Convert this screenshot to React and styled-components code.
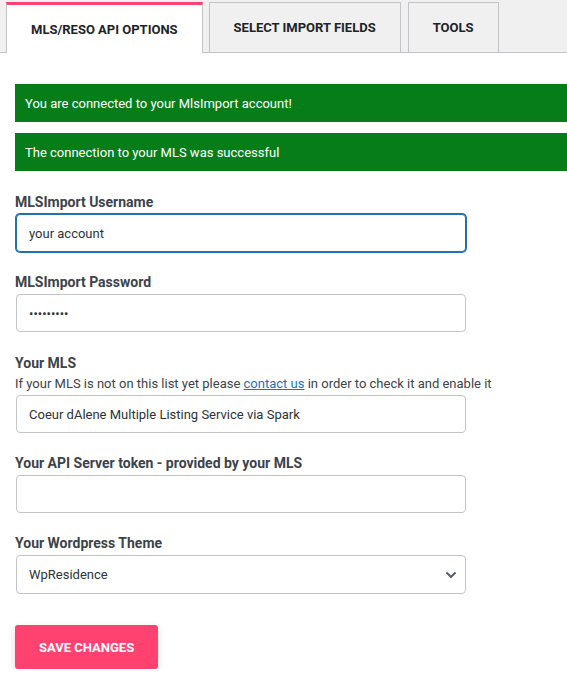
import React from 'react';
import styled, { createGlobalStyle, css } from 'styled-components';

const GlobalStyle = createGlobalStyle`
  body {
    margin: 0;
    background: #ffffff;
    font-family: Roboto, "Liberation Sans", Arial, sans-serif;
    color: #3c434a;
  }
`;

const Page = styled.div`
  width: 567px;
  overflow: hidden;
`;

const TabBar = styled.div`
  display: flex;
  align-items: flex-end;
  gap: 7px;
  height: 53px;
  padding-left: 6px;
  background: #f0f0f0;
  border-bottom: 1px solid #c3c4c7;
  box-sizing: border-box;
`;

const Tab = styled.div`
  display: flex;
  align-items: center;
  justify-content: center;
  height: 50px;
  padding: 0 24px 1px;
  box-sizing: border-box;
  border: 1px solid #c3c4c7;
  border-bottom: none;
  background: #f0f0f0;
  font-size: 13px;
  font-weight: 700;
  color: #1d2327;
  white-space: nowrap;

  ${(p) =>
    p.$active &&
    css`
      height: 51px;
      margin-right: -1px;
      margin-bottom: -1px;
      padding-top: 1px;
      background: #ffffff;
      border-top: 3px solid #ff426f;
    `}
`;

const Content = styled.div`
  padding: 31px 0 0 15px;
`;

const Notices = styled.div`
  display: flex;
  flex-direction: column;
  gap: 11px;
  margin-bottom: 21px;
`;

const Notice = styled.div`
  display: flex;
  align-items: center;
  width: 600px;
  height: 38px;
  padding: 0 10px;
  box-sizing: border-box;
  background: #077d1a;
  color: #ffffff;
  font-size: 13px;
`;

const Field = styled.div`
  margin-bottom: ${(p) => p.$space || 20}px;
`;

const Label = styled.div`
  font-size: 14px;
  line-height: 20px;
  font-weight: 700;
  color: #3c434a;
  margin-bottom: 2px;
`;

const Help = styled.div`
  font-size: 13px;
  line-height: 18px;
  color: #3c434a;
  margin-bottom: 2px;

  a {
    color: #2271b1;
    text-decoration: underline;
  }
`;

const Input = styled.input`
  display: block;
  width: 450px;
  height: 38px;
  margin-left: 1px;
  padding: 0 12px;
  box-sizing: border-box;
  border: 1px solid #c3c4c7;
  border-radius: 4px;
  background: #ffffff;
  font-family: Roboto, "Liberation Sans", Arial, sans-serif;
  font-size: 13px;
  color: #2c3338;
  outline: none;

  ${(p) =>
    p.$focused &&
    css`
      border-color: #2271b1;
      box-shadow: 0 0 0 1px #2271b1;
    `}
`;

const SelectWrap = styled.div`
  position: relative;
  width: 450px;
  margin-left: 1px;
`;

const Select = styled.select`
  display: block;
  width: 100%;
  height: 39px;
  padding: 0 32px 0 12px;
  box-sizing: border-box;
  border: 1px solid #c3c4c7;
  border-radius: 4px;
  background: #ffffff;
  font-family: Roboto, "Liberation Sans", Arial, sans-serif;
  font-size: 13px;
  color: #2c3338;
  appearance: none;
  -webkit-appearance: none;
  outline: none;
`;

const Chevron = styled.svg`
  position: absolute;
  right: 9px;
  top: 16px;
  pointer-events: none;
`;

const SaveButton = styled.button`
  display: block;
  margin-top: 31px;
  height: 44px;
  padding: 0 24px;
  border: none;
  border-radius: 3px;
  background: #ff426f;
  color: #ffffff;
  font-family: Roboto, "Liberation Sans", Arial, sans-serif;
  font-size: 13px;
  font-weight: 700;
  box-shadow: 0 3px 8px rgba(0, 0, 0, 0.14);
  cursor: pointer;
`;

export default function App() {
  return (
    <Page>
      <GlobalStyle />
      <TabBar>
        <Tab $active>MLS/RESO API OPTIONS</Tab>
        <Tab>SELECT IMPORT FIELDS</Tab>
        <Tab>TOOLS</Tab>
      </TabBar>
      <Content>
        <Notices>
          <Notice>You are connected to your MlsImport account!</Notice>
          <Notice>The connection to your MLS was successful</Notice>
        </Notices>

        <Field>
          <Label>MLSImport Username</Label>
          <Input $focused type="text" defaultValue="your account" />
        </Field>

        <Field $space={21}>
          <Label>MLSImport Password</Label>
          <Input type="password" defaultValue="123456789" />
        </Field>

        <Field>
          <Label>Your MLS</Label>
          <Help>
            If your MLS is not on this list yet please <a href="#">contact us</a> in order to check it and enable it
          </Help>
          <Input type="text" defaultValue="Coeur dAlene Multiple Listing Service via Spark" />
        </Field>

        <Field>
          <Label>Your API Server token - provided by your MLS</Label>
          <Input type="text" defaultValue="" />
        </Field>

        <Field>
          <Label>Your Wordpress Theme</Label>
          <SelectWrap>
            <Select defaultValue="wpresidence">
              <option value="wpresidence">WpResidence</option>
            </Select>
            <Chevron width="12" height="8" viewBox="0 0 12 8">
              <path d="M1.5 1.5 L6 6 L10.5 1.5" fill="none" stroke="#50575e" strokeWidth="1.8" />
            </Chevron>
          </SelectWrap>
        </Field>

        <SaveButton>SAVE CHANGES</SaveButton>
      </Content>
    </Page>
  );
}
